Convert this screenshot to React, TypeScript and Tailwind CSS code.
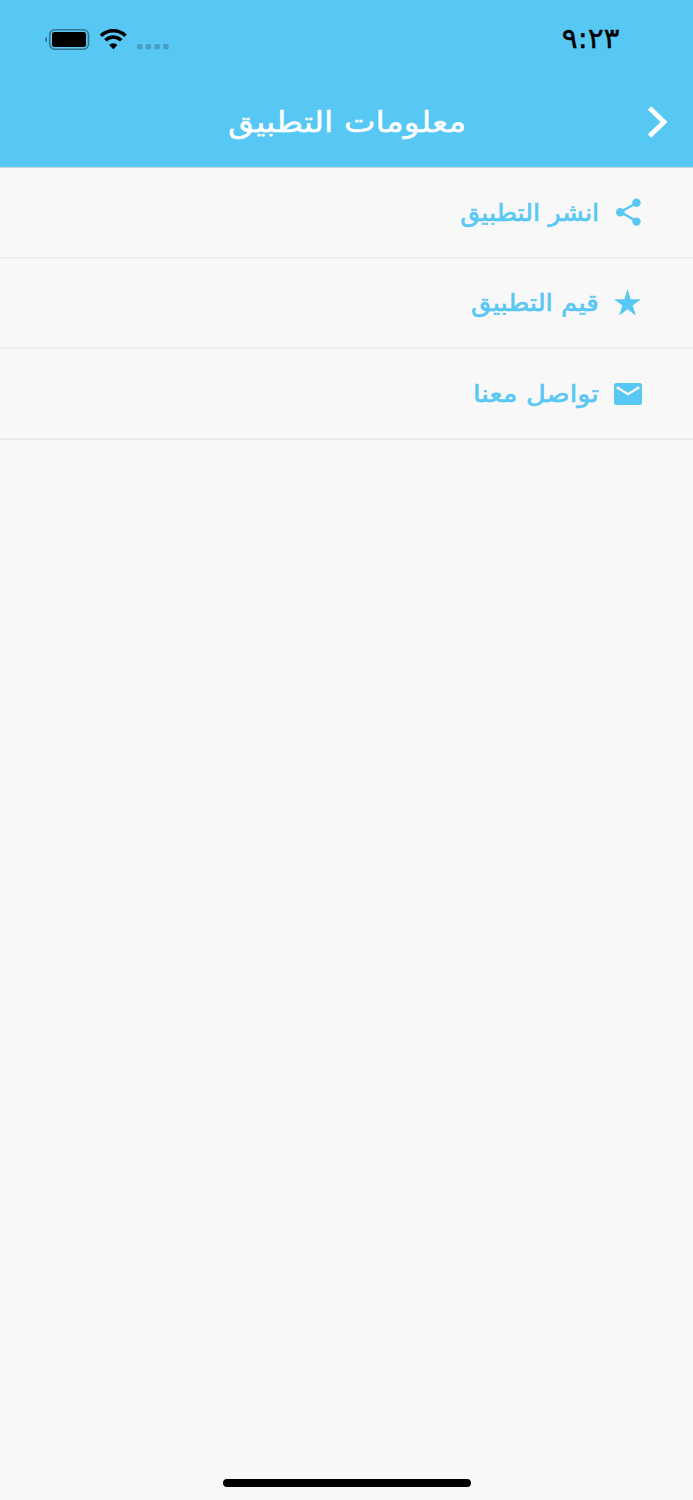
import type { ReactNode } from "react";

const ShareIcon = () => (
  <svg viewBox="0 0 25 28" className="w-[25px] h-7" fill="currentColor">
    <path d="M20.5 5 4.5 14l16 9.2" fill="none" stroke="currentColor" strokeWidth="2.4" />
    <circle cx="20.5" cy="4.7" r="4.2" />
    <circle cx="4.3" cy="14.2" r="4.3" />
    <circle cx="20.5" cy="23.6" r="4.2" />
  </svg>
);

const StarIcon = () => (
  <svg viewBox="0 0 27 27" className="w-[27px] h-[27px] mr-px" fill="currentColor">
    <path d="M13.5 0 16.6 10.2H27l-8.4 6.2L21.8 26.5 13.5 20.3 5.2 26.5 8.4 16.4 0 10.2h10.4z" />
  </svg>
);

const MailIcon = () => (
  <svg viewBox="0 0 28 22" className="w-7 h-[22px] mt-px">
    <rect width="28" height="22" rx="2.5" fill="currentColor" />
    <path d="M2.8 4.2 14 11.2 25.2 4.2" fill="none" stroke="#f8f8f8" strokeWidth="2.4" />
  </svg>
);

type Item = { label: string; icon: ReactNode; textClass: string };

const items: Item[] = [
  { label: "انشر التطبيق", icon: <ShareIcon />, textClass: "scale-x-[1.06]" },
  { label: "قيم التطبيق", icon: <StarIcon />, textClass: "scale-x-[1.085]" },
  { label: "تواصل معنا", icon: <MailIcon />, textClass: "scale-x-[1.135]" },
];

function StatusBar() {
  return (
    <div dir="ltr" className="flex h-[77px] items-center justify-between pl-[45px] pr-[73px]">
      <svg viewBox="0 0 125 24" className="h-6 w-[125px]">
        <path d="M2 9.5C.6 10.2 0 11.2 0 12.5s.6 2.5 2 3.2z" fill="#347690" />
        <rect x="4.7" y="2.8" width="38.8" height="19.4" rx="5" fill="none" stroke="#347690" strokeWidth="1.6" />
        <rect x="7" y="5" width="34" height="15" rx="2.5" />
        <path d="M56 8.8a17.5 17.5 0 0 1 24.5 0M60.4 13.3a11.2 11.2 0 0 1 15.8 0" fill="none" stroke="#000" strokeWidth="3.6" />
        <path d="m68.3 22.3-4.2-4.2a5.9 5.9 0 0 1 8.4 0z" />
        <g fill="#469fc1">
          <rect x="92" y="17" width="5.5" height="5.2" rx="1.6" />
          <rect x="100.7" y="17" width="5.5" height="5.2" rx="1.6" />
          <rect x="109.4" y="17" width="5.5" height="5.2" rx="1.6" />
          <rect x="118.1" y="17" width="5.5" height="5.2" rx="1.6" />
        </g>
      </svg>
      <span className="origin-right scale-x-[1.06] text-[28px] leading-8 text-black [-webkit-text-stroke:0.4px_currentColor]">
        ٩:٢٣
      </span>
    </div>
  );
}

export default function App() {
  return (
    <div dir="rtl" className="flex h-[1500px] w-[693px] flex-col overflow-hidden bg-[#f8f8f8] font-['DejaVu_Sans',sans-serif]">
      <header className="h-[168px] border-b border-[#c8d6dc] bg-[#57c7f3]">
        <StatusBar />
        <div className="grid h-[90px] grid-cols-[1fr_auto_1fr] items-center px-[26px] text-white">
          <svg viewBox="0 0 20 32" className="h-8 w-5">
            <path d="M2.5 2 17 16 2.5 30" fill="none" stroke="currentColor" strokeWidth="4.8" />
          </svg>
          <h1 className="translate-x-px scale-x-[1.155] whitespace-nowrap text-[29px] leading-9 [-webkit-text-stroke:0.4px_currentColor]">
            معلومات التطبيق
          </h1>
        </div>
      </header>
      <ul className="flex-1 text-[#57c7f3]">
        {items.map((item) => (
          <li key={item.label} className="flex h-[90.6px] items-center border-b-2 border-[#ececec] pr-[51px]">
            <span className="flex w-7 justify-center">{item.icon}</span>
            <span
              className={`mr-[15px] mt-px origin-right whitespace-nowrap text-[24px] leading-8 [-webkit-text-stroke:0.6px_currentColor] ${item.textClass}`}
            >
              {item.label}
            </span>
          </li>
        ))}
      </ul>
      <div className="mx-auto mb-[13px] h-2 w-[248px] rounded-full bg-black" />
    </div>
  );
}
